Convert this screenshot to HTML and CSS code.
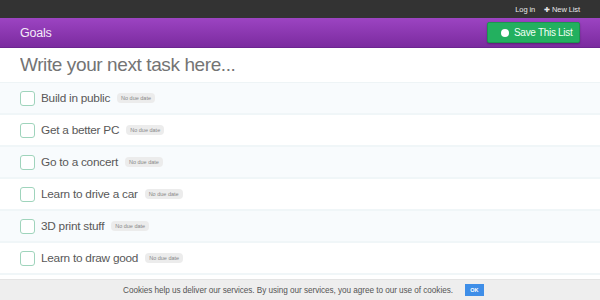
FILE: index.html
```html
<!DOCTYPE html>
<html lang="en">
<head>
  <meta charset="UTF-8" />
  <title>Goals</title>
  <link rel="stylesheet" href="styles.css">
</head>
<body>
  <div class="topbar">
    <a href="#">Log in</a>
    <a href="#"><span class="plus">&#10010;</span> New List</a>
  </div>

  <header class="listbar">
    <h1>Goals</h1>
    <button class="save-btn"><span class="dot"></span>Save This List</button>
  </header>

  <div class="new-task">
    <input type="text" placeholder="Write your next task here...">
  </div>

  <ul class="tasks">
    <li><span class="check"></span><span class="title">Build in public</span><span class="due">No due date</span></li>
    <li><span class="check"></span><span class="title">Get a better PC</span><span class="due">No due date</span></li>
    <li><span class="check"></span><span class="title">Go to a concert</span><span class="due">No due date</span></li>
    <li><span class="check"></span><span class="title">Learn to drive a car</span><span class="due">No due date</span></li>
    <li><span class="check"></span><span class="title">3D print stuff</span><span class="due">No due date</span></li>
    <li><span class="check"></span><span class="title">Learn to draw good</span><span class="due">No due date</span></li>
  </ul>

  <div class="cookies">
    Cookies help us deliver our services. By using our services, you agree to our use of cookies.
    <button class="ok">OK</button>
  </div>
</body>
</html>
```

FILE: styles.css
```css
* { margin: 0; padding: 0; box-sizing: border-box; }

html, body {
  font-family: 'Liberation Sans', Arial, sans-serif;
  background: #fff;
  color: #555;
  height: 300px;
  overflow: hidden;
}

.topbar {
  height: 18px;
  background: #333;
  display: flex;
  justify-content: flex-end;
  align-items: center;
  gap: 9px;
  padding-right: 20px;
}

.topbar a {
  color: #e8e8e8;
  font-size: 7.5px;
  letter-spacing: -0.1px;
  text-decoration: none;
}

.topbar .plus {
  font-size: 7px;
}

.listbar {
  height: 30px;
  background: linear-gradient(#9c44c2, #7b2b9f);
  border-bottom: 1px solid #6c2590;
  display: flex;
  align-items: center;
  justify-content: space-between;
  padding: 0 20px;
}

.listbar h1 {
  font-size: 12.5px;
  font-weight: normal;
  letter-spacing: -0.2px;
  color: #f4eaf8;
}

.save-btn {
  display: flex;
  align-items: center;
  gap: 5px;
  height: 21px;
  width: 93px;
  padding-left: 13px;
  background: #23b05f;
  border: 1px solid #1c9650;
  border-radius: 2px;
  color: #f0fff5;
  font-family: inherit;
  font-size: 10px;
  letter-spacing: -0.3px;
  white-space: nowrap;
  box-shadow: 0 1px 2px rgba(0, 0, 0, 0.3);
}

.save-btn .dot {
  width: 8px;
  height: 8px;
  border-radius: 50%;
  background: #fff;
}

.new-task {
  height: 35px;
  display: flex;
  align-items: center;
  padding: 0 20px;
  border-bottom: 1px solid #eef4f6;
}

.new-task input {
  width: 100%;
  border: none;
  outline: none;
  font-family: inherit;
  font-size: 19px;
  letter-spacing: -0.4px;
  color: #666;
}

.new-task input::placeholder {
  color: #747474;
}

.tasks {
  list-style: none;
}

.tasks li {
  height: 32px;
  display: flex;
  align-items: center;
  padding-left: 20px;
  border-bottom: 2px solid #f0f6f8;
}

.tasks li:nth-child(odd) {
  background: #f8fbfd;
}

.check {
  width: 15px;
  height: 15px;
  border: 1px solid #9fd4bc;
  border-radius: 3px;
  background: #fff;
  margin-right: 6px;
}

.title {
  font-size: 11.8px;
  letter-spacing: -0.25px;
  color: #585858;
}

.due {
  margin-left: 7px;
  font-size: 5.5px;
  color: #888;
  background: #ececec;
  border-radius: 4px;
  padding: 2px 4px;
}

.cookies {
  position: fixed;
  left: 0;
  right: 0;
  bottom: 0;
  height: 21px;
  background: #eee;
  border-top: 1px solid #e4e4e4;
  display: flex;
  justify-content: center;
  align-items: center;
  gap: 12px;
  font-size: 8.2px;
  letter-spacing: -0.05px;
  color: #555;
  padding-left: 7px;
}

.ok {
  width: 19px;
  height: 12px;
  background: #3e8ee8;
  border: none;
  color: #fff;
  font-family: inherit;
  font-size: 5.5px;
  font-weight: bold;
}
```
